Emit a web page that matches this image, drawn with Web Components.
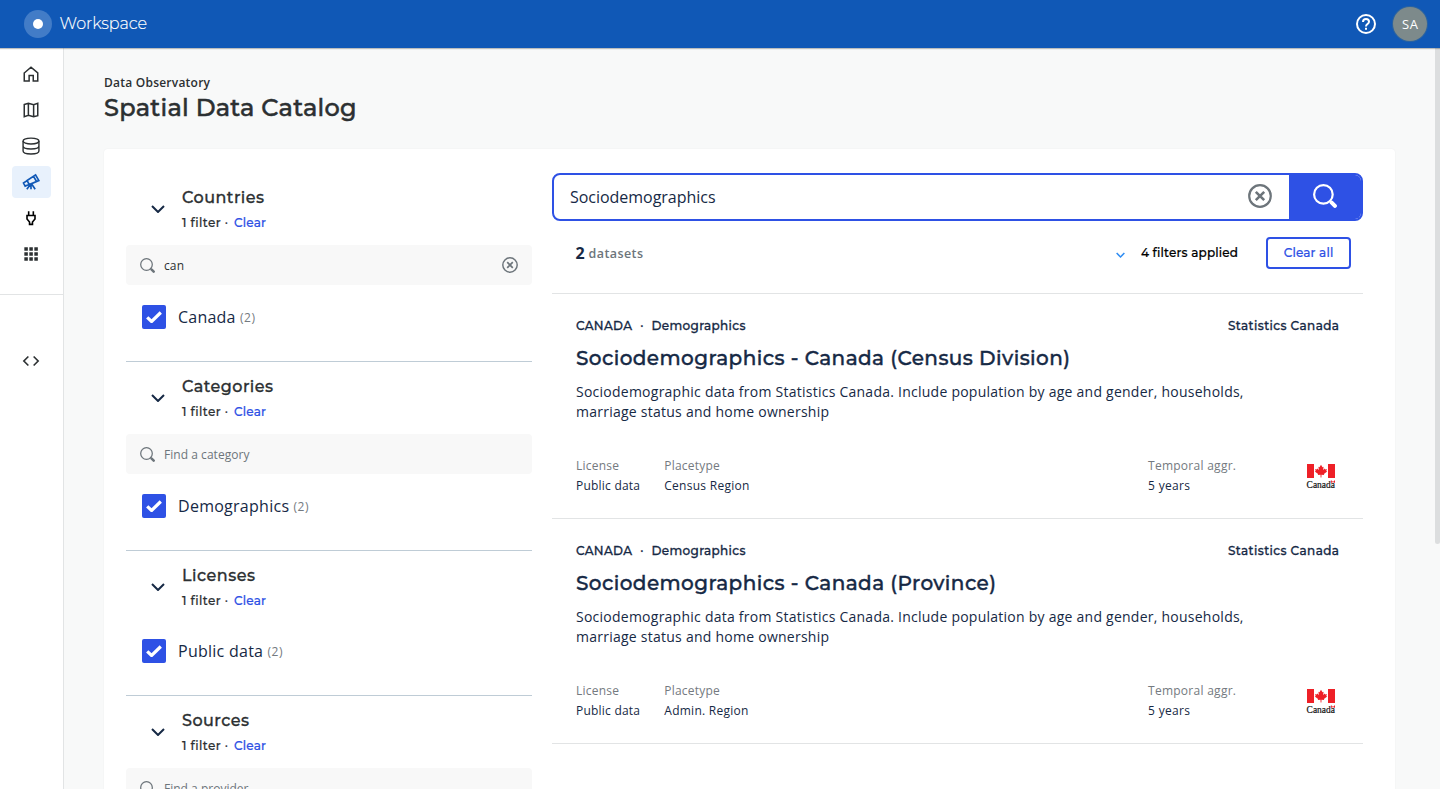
<!DOCTYPE html>
<html lang="en">
<head>
<meta charset="utf-8">
<title>Spatial Data Catalog</title>
<style>
html,body{margin:0;height:100%;overflow:hidden}
body{font-family:"Open Sans",sans-serif;background:#f8f9f9;color:#2c3032}
</style>
</head>
<body>
<catalog-app></catalog-app>
<script>
const HEAD = 'Montserrat,Inter,"Open Sans",sans-serif';
const define = (name, render, after) => customElements.define(name, class extends HTMLElement {
  connectedCallback() {
    if (this.shadowRoot) return;
    const t = document.createElement('template');
    t.innerHTML = render(this);
    this.attachShadow({mode: 'open'}).appendChild(t.content.cloneNode(true));
    if (after) after(this);
  }
});

/* A single line of text whose tracking is adjusted to fill the width w. */
define('fit-text', () => `<style>:host{display:inline-block;white-space:pre}</style><slot></slot>`, el => {
  queueMicrotask(() => {
    const w = parseFloat(el.getAttribute('w'));
    const n = el.textContent.length;
    el.style.letterSpacing = '0';
    const natural = el.getBoundingClientRect().width;
    el.style.letterSpacing = ((w - natural) / Math.max(1, n - 1)).toFixed(3) + 'px';
    el.style.width = w + 'px';
  });
});

const ICONS = {
  home: ['0 0 24 24', '<path d="M3 10.600 12 3l9 7.600V21.200h-6v-7.200H9.500v7.200H3Z"/>'],
  map: ['0 0 24 24', '<path d="M3 4.600 8.500 3l7 2 5.500-1.800v16.300L15.500 21l-7-2L3 20.800ZM8.500 3v16M15.500 5v16"/>'],
  db: ['0 0 24 24', '<ellipse cx="12" cy="6" rx="9.500" ry="3.500"/><path d="M2.500 6v12c0 2 4.200 3.500 9.500 3.500s9.500-1.500 9.500-3.500V6M2.500 12c0 2 4.200 3.500 9.500 3.500s9.500-1.500 9.500-3.500"/>'],
  telescope: ['0 0 24 24', '<path d="m7.300 10.200 10.200-6.700 3.900 6.700-11.500 4.900ZM3 13.200l4.300-2.900 2.500 4.600-4.800 2ZM15 5.200l3.700 6.200M12 15.300v5.500M11 15.400l-4 5.400M13 14.800l4 6"/>'],
  plug: ['0 0 24 24', '<path d="M8.500 2v6M15.500 2v6M6 8.200h12v5.300L14.200 18v3.500H9.800V18L6 13.500Z"/>'],
  grid: ['0 0 24 24', '<path stroke="none" fill="currentColor" d="M4 4h4.200v4.200H4ZM10 4h4.200v4.200H10ZM16 4h4.200v4.200H16ZM4 10h4.200v4.200H4ZM10 10h4.200v4.200H10ZM16 10h4.200v4.200H16ZM4 16h4.200v4.200H4ZM10 16h4.200v4.200H10ZM16 16h4.200v4.200H16Z"/>'],
  code: ['0 0 24 24', '<path d="m8.500 6-6 6 6 6M15.500 6l6 6-6 6"/>'],
  search: ['0 0 24 24', '<circle cx="10.400" cy="10.400" r="9.300"/><path stroke-width="4" stroke-linecap="round" d="m18.700 18.700 3.200 3.200"/><path d="m16.500 16.500 3 3"/>'],
  clear: ['0 0 24 24', '<circle cx="12" cy="12" r="10.800"/><path stroke-width="2.600" d="m7.800 7.800 8.400 8.400M16.200 7.800l-8.400 8.400"/>'],
  chevron: ['0 0 14 8', '<path d="m1 1 6 6 6-6"/>'],
  check: ['0 0 16 12', '<path d="m1.200 6.300 4.400 4.200L14.800 1.500"/>'],
  help: ['0 0 20 20', '<circle cx="10" cy="10" r="9"/><path d="M7 8c0-1.800 1.300-2.900 3-2.900s3 1.100 3 2.700c0 2.200-3 2.300-3 4.600M10 13.800v2"/>']
};
define('ui-icon', el => {
  const [box, body] = ICONS[el.getAttribute('name')];
  return `<style>:host{display:block;flex:none}svg{display:block}</style>
  <svg width="${el.getAttribute('w') || 20}" height="${el.getAttribute('h') || el.getAttribute('w') || 20}" viewBox="${box}" fill="none" stroke="currentColor" stroke-width="${el.getAttribute('sw') || 2}">${body}</svg>`;
});

define('top-bar', () => `<style>
:host{display:flex;align-items:center;height:48px;background:#1058b6;color:#fff;padding:0 13px 0 24px;box-sizing:border-box;box-shadow:0 1px 1px rgba(44,48,50,.3);position:relative;flex:none}
.logo{width:28px;height:28px;border-radius:50%;background:#427cc7;display:grid;place-items:center;margin-right:7.500px}
.logo i{width:10px;height:10px;border-radius:50%;background:#fff}
.name{font:300 16px/24px ${HEAD};flex:1;padding-bottom:1px;-webkit-text-stroke:.15px}
.av{width:34px;height:34px;border-radius:50%;background:#7d8a8b;box-shadow:0 0 0 1px #2d649f;display:grid;place-items:center;font:13px/34px "Open Sans",sans-serif;margin-left:17px}
</style><div class="logo"><i></i></div><div class="name"><fit-text w="87.500">Workspace</fit-text></div>
<ui-icon name="help" w="20"></ui-icon><div class="av"><fit-text w="15.800">SA</fit-text></div>`);

define('side-nav', () => `<style>
:host{display:flex;flex-direction:column;width:64px;box-sizing:border-box;border-right:1px solid #e2e4e5;background:#fff;flex:none}
nav{display:flex;flex-direction:column;gap:4px;padding:10px 12px 24px;border-bottom:1px solid #e2e4e5}
a{height:32px;width:39px;border-radius:4px;display:grid;place-items:center;color:#2c3032;box-sizing:border-box;padding-right:1px}
a.on{background:#e8f1fc;color:#1058b6}
.dev{margin:50px 12px}
.k{color:#000}
</style><nav><a><ui-icon name="home" w="18" sw="2"></ui-icon></a><a><ui-icon name="map" w="18" sw="2"></ui-icon></a><a><ui-icon name="db" w="20" sw="1.700"></ui-icon></a><a class="on"><ui-icon name="telescope" w="20"></ui-icon></a><a class="k"><ui-icon name="plug" w="16" sw="2.400"></ui-icon></a><a><ui-icon name="grid" w="20"></ui-icon></a></nav>
<a class="dev"><ui-icon name="code" w="18" sw="2.200"></ui-icon></a>`);

define('filter-facet', el => {
  const a = k => el.getAttribute(k);
  const search = a('value') || a('hint');
  return `<style>
:host{display:block}
header{display:flex;align-items:center;height:73px;box-sizing:border-box;padding:0 0 0 25px;border-top:1px solid #bfccd6}
:host([first]) header{border-top-color:transparent}
header ui-icon{color:#162945;margin-right:17px}
h3{margin:1px 0 0;font:500 16px/24px ${HEAD};color:#2c3032;-webkit-text-stroke:.3px}
.sub{font:500 12px/20px ${HEAD};display:flex;margin-top:3px;color:#2c3032;-webkit-text-stroke:.2px}
.sub .c{color:#2e51e5;margin-left:6px}
.box{height:40px;border-radius:4px;background:#f8f8f8;display:flex;align-items:center;padding:0 14px 0 14px;box-sizing:border-box;color:#6d757b;font-size:12px;line-height:20px}
.box .t{margin-left:9px;flex:1;padding-top:2px}
.val{color:#2c3032}
.opt{display:flex;align-items:center;height:24px;padding:0 16px;margin:${search ? 20 : 16}px 0 32px}
.cb{width:24px;height:24px;border-radius:2px;background:#2e51e5;color:#fff;display:grid;place-items:center;margin-right:12px}
.l{font-size:16px;line-height:24px;color:#162945}
.n{font-size:12px;line-height:24px;color:#747a80;margin-left:4.500px;padding-top:2px}
</style>
<header><ui-icon name="chevron" w="14" h="8" sw="2"></ui-icon><div><h3><fit-text w="${a('hw')}">${a('heading')}</fit-text></h3>
<div class="sub"><fit-text w="46">1 filter ·</fit-text><fit-text class="c" w="32">Clear</fit-text></div></div></header>
${search ? `<div class="box"><ui-icon name="search" w="15" sw="2"></ui-icon><span class="t ${a('value') ? 'val' : ''}"><fit-text w="${a('sw')}">${search}</fit-text></span>${a('value') ? '<ui-icon name="clear" w="16" sw="2.200"></ui-icon>' : ''}</div>` : ''}
${a('option') ? `<div class="opt"><span class="cb"><ui-icon name="check" w="16" h="12" sw="3.200"></ui-icon></span><span class="l"><fit-text w="${a('ow')}">${a('option')}</fit-text></span><span class="n"><fit-text w="15">(2)</fit-text></span></div>` : ''}`;
});

define('search-bar', () => `<style>
:host{display:flex;height:48px;box-sizing:border-box;border:2px solid #2e51e5;border-radius:8px;overflow:hidden;align-items:center;color:#162945;padding-left:16px;background:#fff}
.t{flex:1;font-size:16px;line-height:24px}
.x{color:#6d757b;margin:0 17px 2px 0}
.b{width:72px;height:100%;background:#2e51e5;color:#fff;display:grid;place-items:center;box-sizing:border-box;padding-bottom:2px}
</style><span class="t"><fit-text w="145.500">Sociodemographics</fit-text></span><ui-icon class="x" name="clear" w="24" sw="2.200"></ui-icon><span class="b"><ui-icon name="search" w="24" sw="2.200"></ui-icon></span>`);

define('result-summary', () => `<style>
:host{display:flex;align-items:center;height:72px;box-sizing:border-box;padding:0 12px 8px 23.500px;font:600 12.500px/20px "Open Sans",sans-serif}
b{font-size:16px;font-weight:700;color:#162945;width:13px}
.d{color:#6d757b;flex:1;padding-top:2px}
ui-icon{color:#2f8df3;margin:3px 16px 0 0}
.f{font:500 12px/20px ${HEAD};color:#000;margin-right:28px;-webkit-text-stroke:.2px}
button{all:unset;box-sizing:border-box;width:85px;height:32px;border:2px solid #2e51e5;border-radius:4px;color:#2e51e5;display:grid;place-items:center;font:500 12px/20px ${HEAD};-webkit-text-stroke:.2px}
</style><b>2</b><span class="d"><fit-text w="54.500">datasets</fit-text></span><ui-icon name="chevron" w="9" h="6" sw="2.400"></ui-icon><span class="f"><fit-text w="97">4 filters applied</fit-text></span><button><fit-text w="49.500">Clear all</fit-text></button>`);

define('canada-mark', () => `<style>:host{display:block;width:30px;height:28px}svg{display:block}</style>
<svg width="30" height="28" viewBox="0 0 30 28"><path fill="#ee2027" d="M1 1h7v14H1ZM22 1h7v14h-7ZM15 1.700l1.500 2.600 1.100-.5-.5 3.100 1.700-1.500.4 1 1.700-.3-.6 1.800.9.600-3.300 2.500.3 1.100-2.700-.3-.1 2.700h-.8l-.1-2.700-2.700.3.300-1.100-3.300-2.500.9-.6-.6-1.800 1.700.3.400-1 1.700 1.500-.5-3.100 1.100.5Z"/><text x="0.600" y="25.400" font-family="Liberation Serif" font-size="10" textLength="28.400" lengthAdjust="spacingAndGlyphs" fill="#111" stroke="#111" stroke-width=".2">Canada</text><path fill="#ee2027" d="M24.800 17.600h1.100v2.200h-1.100ZM28 17.600h1v2.200h-1ZM26.400 18h1.200v1.400h-1.200Z"/></svg>`);

define('dataset-card', el => {
  const a = k => el.getAttribute(k);
  return `<style>
:host{display:block;height:225px;box-sizing:border-box;border-top:1px solid #e2e4e5;padding:22px 24px 0 24px;color:#162945}
.m{display:flex;font:500 12px/20px ${HEAD};-webkit-text-stroke:.3px}
.m .s{width:19.500px;text-align:center;font-weight:500}
.m .r{margin-left:auto}
h2{margin:8px 0 0;font:500 20px/28px ${HEAD};-webkit-text-stroke:.4px}
p{margin:10px 0 0;font-size:14px;line-height:20px;display:flex;flex-direction:column;align-items:flex-start}
footer{display:flex;margin-top:34px;font-size:12px;line-height:20px}
footer>div{display:flex;flex-direction:column}
.g{color:#747a80}
canada-mark{margin:7px 3px 0 70px}
</style><div class="m"><fit-text w="56">CANADA</fit-text><span class="s">·</span><fit-text w="94">Demographics</fit-text><fit-text class="r" w="111">Statistics Canada</fit-text></div>
<h2><fit-text w="${a('hw')}">${a('heading')}</fit-text></h2>
<p><fit-text w="667.500">Sociodemographic data from Statistics Canada. Include population by age and gender, households,</fit-text><fit-text w="253">marriage status and home ownership</fit-text></p>
<footer><div style="width:88.300px"><span class="g"><fit-text w="43">License</fit-text></span><span><fit-text w="64">Public data</fit-text></span></div>
<div style="flex:1"><span class="g"><fit-text w="55.500">Placetype</fit-text></span><span><fit-text w="${a('pw')}">${a('place')}</fit-text></span></div>
<div style="width:88px"><span class="g"><fit-text w="88">Temporal aggr.</fit-text></span><span><fit-text w="42">5 years</fit-text></span></div>
<canada-mark></canada-mark></footer>`;
});

define('catalog-app', () => `<style>
:host{display:flex;flex-direction:column;height:100vh;overflow:hidden}
.body{display:flex;flex:1;min-height:0}
main{flex:1;min-width:0;padding:25px 40px 0;box-sizing:border-box;overflow:hidden}
.e{font:600 12px/20px "Open Sans",sans-serif}
h1{margin:-1px 0 0;font:500 24px/32px ${HEAD};color:#2c3032;-webkit-text-stroke:.5px}
.panel{margin-top:25px;background:#fff;border-radius:4px;height:900px;padding:24px 32px 0 22px;display:grid;grid-template-columns:406px 811px;column-gap:20px;box-sizing:border-box;box-shadow:0 0 2px rgba(44,48,50,.05)}
.filters{margin-top:-1px}
.bar{width:5px;height:496px;background:#dcdedf;border-radius:0 0 3px 3px;flex:none}
.end{border-top:1px solid #e2e4e5}
</style><top-bar></top-bar><div class="body"><side-nav></side-nav><main>
<div class="e"><fit-text w="106">Data Observatory</fit-text></div><h1><fit-text w="252.500">Spatial Data Catalog</fit-text></h1>
<section class="panel"><div class="filters">
<filter-facet first heading="Countries" hw="82" value="can" sw="20" option="Canada" ow="57.500"></filter-facet>
<filter-facet heading="Categories" hw="91" hint="Find a category" sw="85.500" option="Demographics" ow="111"></filter-facet>
<filter-facet heading="Licenses" hw="73" option="Public data" ow="85"></filter-facet>
<filter-facet heading="Sources" hw="67" hint="Find a provider" sw="84.500"></filter-facet>
</div><div><search-bar></search-bar><result-summary></result-summary>
<dataset-card heading="Sociodemographics - Canada (Census Division)" hw="494" place="Census Region" pw="85"></dataset-card>
<dataset-card heading="Sociodemographics - Canada (Province)" hw="420" place="Admin. Region" pw="84"></dataset-card>
<div class="end"></div></div></section></main><div class="bar"></div></div>`);
</script>
</body>
</html>
